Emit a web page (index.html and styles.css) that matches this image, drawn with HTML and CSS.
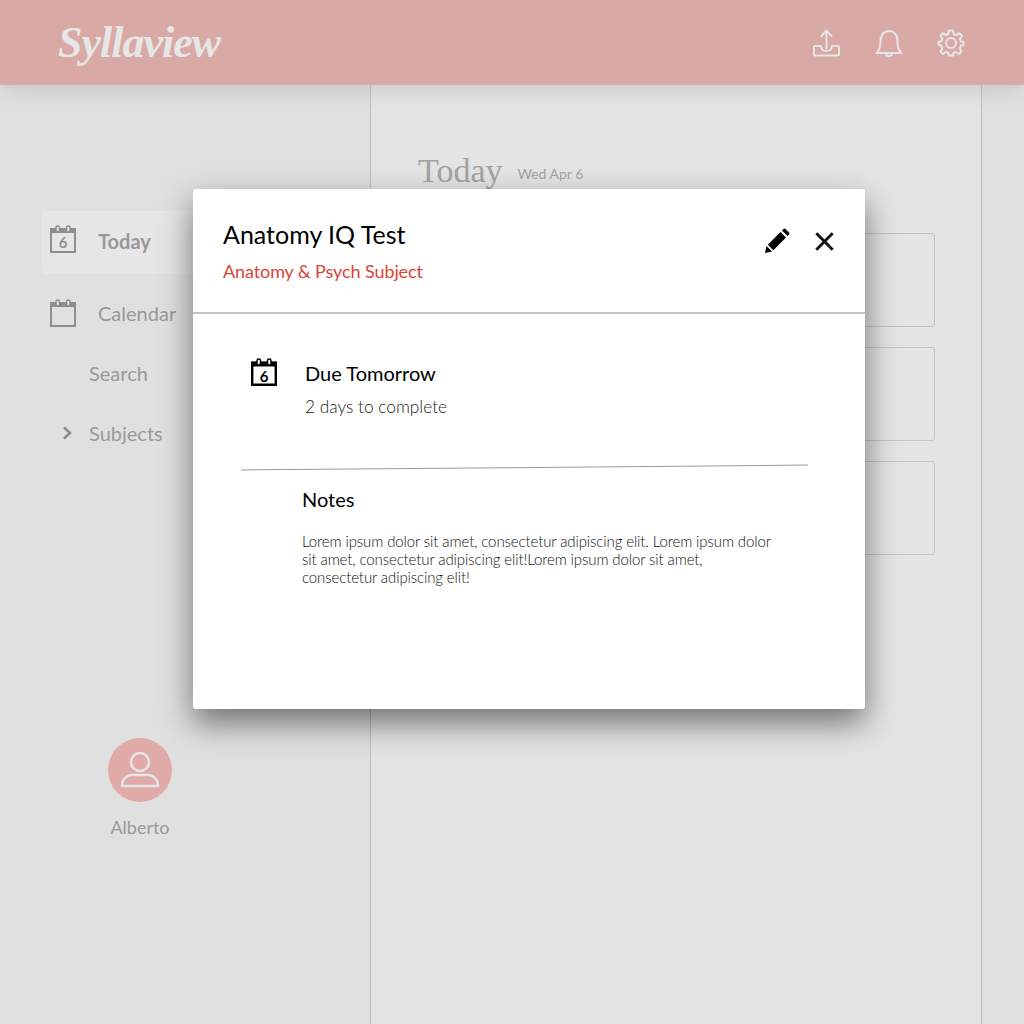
FILE: index.html
```html
<!DOCTYPE html>
<html lang="en">

<head>
    <meta charset="UTF-8">
    <title>Syllaview</title>
    <link rel="stylesheet" href="styles.css">
</head>

<body>

    <header class="topbar">
        <div class="logo">Syllaview</div>
        <div class="top-icons">
            <svg class="top-icon" viewBox="0 0 28 28">
                <path d="M13.500 19V1.500M8.500 7 13.500 1.500l5 5.500" />
                <path d="M8 17H2.500Q1 17 1 18.500V25Q1 26.500 2.500 26.500H24.500Q26 26.500 26 25V18.500Q26 17 24.500 17H19Q18.500 22 13.500 22T8 17Z" />
            </svg>
            <svg class="top-icon" viewBox="0 0 28 28">
                <path d="M1.500 24H26.500C23 21 22.500 17 22.500 12 22.500 6 19 2 14 2S5.500 6 5.500 12C5.500 17 5 21 1.500 24Z" />
                <path d="M11 24.500Q11 27 14 27T17 24.500" />
            </svg>
            <svg class="top-icon" viewBox="0 0 28 28">
                <circle cx="14" cy="14" r="5" />
                <path d="M12 1.500H16L16.700 5 19.500 6.200 22.500 4.200 25 7 23 9.800 24 12.500 26.500 13V16L23.800 16.800 22.800 19.500 24.500 22.500 22 25 19 23 16.500 24 16 26.500H12L11.300 24 8.800 23 6 25 3.500 22.500 5.300 19.500 4.200 16.800 1.500 16V13L4.200 12.300 5.300 9.500 3.500 6.800 6 4.200 8.800 6 11.300 5Z" />
            </svg>
        </div>
    </header>

    <div class="layout">
        <aside class="sidebar">
            <nav class="nav">
                <div class="nav-row nav-active">
                    <svg class="cal-icon" viewBox="0 0 26 28">
                        <path d="M1 5H25V27H1Z" />
                        <path class="cal-band" d="M0 3H26V8H0Z" />
                        <rect class="cal-ring cal-ring-active" x="6" y="1" width="3.500" height="6" rx="1.700" />
                        <rect class="cal-ring cal-ring-active" x="16.500" y="1" width="3.500" height="6" rx="1.700" />
                        <text x="13" y="23" class="cal-num">6</text>
                    </svg>
                    <span>Today</span>
                </div>
                <div class="nav-row">
                    <svg class="cal-icon cal-low" viewBox="0 0 26 28">
                        <path d="M1 5H25V27H1Z" />
                        <path class="cal-band" d="M0 3H26V8H0Z" />
                        <rect class="cal-ring" x="6" y="1" width="3.500" height="6" rx="1.700" />
                        <rect class="cal-ring" x="16.500" y="1" width="3.500" height="6" rx="1.700" />
                    </svg>
                    <span>Calendar</span>
                </div>
                <div class="nav-sub">Search</div>
                <div class="nav-sub nav-sub-last">
                    <svg class="chevron" viewBox="0 0 10 14">
                        <path d="M2 1.500 8 7 2 12.500" />
                    </svg>
                    <span>Subjects</span>
                </div>
            </nav>
            <div class="profile">
                <div class="avatar">
                    <svg viewBox="0 0 40 36">
                        <circle cx="20" cy="10" r="9" />
                        <path d="M2 34C2 26 8 23 12 23H28C32 23 38 26 38 34Z" />
                    </svg>
                </div>
                <div class="profile-name">Alberto</div>
            </div>
        </aside>

        <main class="main">
            <div class="day-head">
                <h1>Today</h1>
                <span>Wed Apr 6</span>
            </div>
            <div class="card"></div>
            <div class="card"></div>
            <div class="card"></div>
        </main>

        <div class="rail"></div>
    </div>

    <div class="modal">
        <div class="modal-head">
            <div>
                <h2>Anatomy IQ Test</h2>
                <div class="subject">Anatomy &amp; Psych Subject</div>
            </div>
            <div class="modal-actions">
                <svg class="pencil" viewBox="0 0 26 26">
                    <path d="M1 25 2.500 18 8 23.500Z" />
                    <path d="M3.800 16.700 16.500 4 22 9.500 9.300 22.200Z" />
                    <path d="M18 2.500 19.500 1Q20.500 0 21.500 1L25 4.500Q26 5.500 25 6.500L23.500 8Z" />
                </svg>
                <svg class="close" viewBox="0 0 18 18">
                    <path d="M2 2 16 16M16 2 2 16" />
                </svg>
            </div>
        </div>
        <div class="modal-body">
            <div class="due">
                <svg class="due-icon" viewBox="0 0 26 28">
                    <path class="due-frame" d="M1.200 5H24.800V26.800H1.200Z" />
                    <path d="M0 3.500H26V8.500H0Z" />
                    <rect class="due-ring" x="6" y="1" width="3.500" height="6" rx="1.700" />
                    <rect class="due-ring" x="16.500" y="1" width="3.500" height="6" rx="1.700" />
                    <text x="13" y="24" class="due-num">6</text>
                </svg>
                <div>
                    <div class="due-title">Due Tomorrow</div>
                    <div class="due-sub">2 days to complete</div>
                </div>
            </div>
            <div class="tilted"></div>
            <div class="notes">
                <h3>Notes</h3>
                <p>Lorem ipsum dolor sit amet, consectetur adipiscing elit. Lorem ipsum dolor sit amet, consectetur adipiscing elit!Lorem ipsum dolor sit amet, consectetur adipiscing elit!</p>
            </div>
        </div>
    </div>

</body>

</html>
```

FILE: styles.css
```css
* {
    margin: 0;
    padding: 0;
    box-sizing: border-box;
}

body {
    width: 1024px;
    height: 1024px;
    overflow: hidden;
    position: relative;
    background: #e4e4e4;
    font-family: Lato, "Open Sans", sans-serif;
    color: #000;
}

.topbar {
    height: 85px;
    background: #d9a9a5;
    display: flex;
    align-items: center;
    justify-content: space-between;
    padding: 0 59px 0 58px;
    position: relative;
    z-index: 2;
    box-shadow: 0 2px 24px rgba(0, 0, 0, 0.14);
}

.logo {
    font-family: "Liberation Serif", serif;
    font-style: italic;
    font-weight: bold;
    font-size: 44px;
    letter-spacing: -1px;
    color: #e6e6e6;
}

.top-icons {
    display: flex;
    gap: 34px;
}

.top-icon {
    width: 28px;
    height: 28px;
    fill: none;
    stroke: #e6e6e6;
    stroke-width: 2;
    stroke-linejoin: round;
    stroke-linecap: round;
}

.layout {
    height: 939px;
    display: flex;
}

.sidebar {
    width: 371px;
    background: #e0e0e0;
    border-right: 1px solid #bdbdbd;
    padding: 126px 0 0 42px;
    flex: none;
}

.nav-row {
    height: 63px;
    display: flex;
    align-items: center;
    gap: 22px;
    padding: 0 0 4px 8px;
    font-size: 20px;
    color: #999;
    margin-bottom: 9px;
}

.nav-active {
    background: #e6e6e6;
    border-radius: 4px;
    font-weight: bold;
}

.cal-icon {
    width: 26px;
    height: 28px;
    margin-top: -3px;
    fill: none;
    stroke: #8e8e8e;
    stroke-width: 2;
}

.cal-low {
    margin-top: 1px;
}

.cal-band {
    fill: #8e8e8e;
    stroke: none;
}

.cal-ring {
    fill: #e0e0e0;
    stroke-width: 1.500;
}

.cal-ring-active {
    fill: #e6e6e6;
}

.cal-num {
    font-size: 15px;
    font-weight: bold;
    fill: #8e8e8e;
    stroke: none;
    text-anchor: middle;
}

.nav-sub {
    font-size: 20px;
    color: #999;
    padding-left: 47px;
    height: 60px;
    line-height: 24px;
    margin-top: 15px;
}

.nav-sub-last {
    display: flex;
    gap: 17px;
    padding-left: 20px;
    margin-top: 0;
}

.chevron {
    width: 10px;
    height: 24px;
    fill: none;
    stroke: #8e8e8e;
    stroke-width: 2.500;
}

.profile {
    width: 196px;
    margin-top: 257px;
    display: flex;
    flex-direction: column;
    align-items: center;
}

.avatar {
    width: 64px;
    height: 64px;
    border-radius: 50%;
    background: #dfaaa7;
    display: flex;
    align-items: center;
    justify-content: center;
}

.avatar svg {
    width: 40px;
    height: 36px;
    fill: none;
    stroke: #e6e6e6;
    stroke-width: 2.500;
}

.profile-name {
    margin-top: 14px;
    font-size: 18px;
    color: #999;
}

.main {
    flex: 1;
    padding: 67px 46px 0 47px;
}

.day-head {
    display: flex;
    align-items: flex-start;
    gap: 15px;
    height: 81px;
    color: #a3a3a3;
}

.day-head h1 {
    font-family: "Liberation Serif", serif;
    font-weight: normal;
    font-size: 34px;
}

.day-head span {
    font-size: 14px;
    margin-top: 13px;
}

.card {
    height: 94px;
    margin-bottom: 20px;
    border: 1px solid #c4c4c4;
    border-radius: 3px;
}

.rail {
    width: 43px;
    background: #e0e0e0;
    border-left: 1px solid #bdbdbd;
    flex: none;
}

.modal {
    position: absolute;
    z-index: 3;
    left: 193px;
    top: 189px;
    width: 672px;
    height: 520px;
    background: #fff;
    border-radius: 3px;
    box-shadow: 0 14px 32px rgba(0, 0, 0, 0.5);
}

.modal-head {
    height: 125px;
    border-bottom: 2px solid #c4c4c4;
    padding: 27px 30px 0;
    display: flex;
    justify-content: space-between;
}

.modal-head h2 {
    font-weight: normal;
    font-size: 25px;
    line-height: 36px;
}

.subject {
    margin-top: 5px;
    font-size: 18px;
    letter-spacing: -0.1px;
    line-height: 28px;
    color: #db4437;
}

.modal-actions {
    display: flex;
    gap: 24px;
    padding-top: 12px;
}

.pencil {
    width: 26px;
    height: 26px;
}

.close {
    width: 21px;
    height: 21px;
    margin-top: 3px;
    fill: none;
    stroke: #111;
    stroke-width: 2.500;
}

.modal-body {
    padding: 44px 57px 0 48px;
}

.due {
    display: flex;
    gap: 28px;
    padding-left: 10px;
}

.due-icon {
    width: 26px;
    height: 28px;
    flex: none;
}

.due-frame {
    fill: #fff;
    stroke: #000;
    stroke-width: 2.400;
}

.due-ring {
    fill: #fff;
    stroke: #000;
    stroke-width: 1.500;
}

.due-num {
    font-size: 15px;
    font-weight: bold;
    text-anchor: middle;
}

.due-title {
    font-size: 20px;
    line-height: 30px;
}

.due-sub {
    margin-top: 6px;
    font-size: 17.300px;
    font-weight: 300;
    line-height: 26px;
    color: #222;
}

.tilted {
    height: 1px;
    margin-top: 47px;
    background: #9a9a9a;
    transform: rotate(-0.5deg);
}

.notes {
    padding: 18px 30px 0 61px;
}

.notes h3 {
    font-weight: normal;
    font-size: 20px;
    line-height: 26px;
}

.notes p {
    margin-top: 20px;
    font-size: 15px;
    letter-spacing: -0.11px;
    font-weight: 300;
    line-height: 18px;
    color: #111;
}
```
